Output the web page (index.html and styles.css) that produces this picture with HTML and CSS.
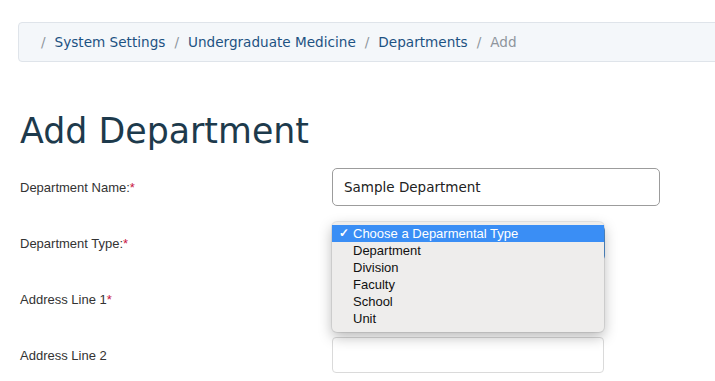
FILE: index.html
```html
<!DOCTYPE html>
<html lang="en">
<head>
    <meta charset="UTF-8">
    <meta name="viewport" content="width=device-width, initial-scale=1.0">
    <title>Add Department</title>
    <link rel="stylesheet" href="styles.css">
</head>
<body>
    <div class="page">
        <nav class="crumbs">
            <span class="sep">/</span>
            <a href="#">System Settings</a>
            <span class="sep">/</span>
            <a href="#">Undergraduate Medicine</a>
            <span class="sep">/</span>
            <a href="#">Departments</a>
            <span class="sep">/</span>
            <span class="current">Add</span>
        </nav>

        <h1 class="title">Add Department</h1>

        <form class="dept-form">
            <div class="form-row">
                <label for="dname">Department Name:<span class="req">*</span></label>
                <input type="text" id="dname" class="field field-wide" value="Sample Department">
            </div>

            <div class="form-row">
                <label for="dtype">Department Type:<span class="req">*</span></label>
                <div class="select-wrap">
                    <div id="dtype" class="field field-select"></div>
                    <ul class="popup">
                        <li class="active"><span class="tick">&#10003;</span>Choose a Deparmental Type</li>
                        <li>Department</li>
                        <li>Division</li>
                        <li>Faculty</li>
                        <li>School</li>
                        <li>Unit</li>
                    </ul>
                </div>
            </div>

            <div class="form-row">
                <label for="addr1">Address Line 1<span class="req">*</span></label>
                <input type="text" id="addr1" class="field">
            </div>

            <div class="form-row">
                <label for="addr2">Address Line 2</label>
                <input type="text" id="addr2" class="field">
            </div>
        </form>
    </div>
</body>
</html>
```

FILE: styles.css
```css
body {
    margin: 0;
    overflow: hidden;
    background: #fff;
    font-family: "Liberation Sans", Arial, sans-serif;
}

.page {
    padding: 22px 0 0 18px;
}

.crumbs {
    display: flex;
    align-items: center;
    width: 760px;
    height: 38px;
    padding-left: 20px;
    background: #f4f7fa;
    border: 1px solid #dfe4ea;
    border-radius: 4px;
    font-family: "DejaVu Sans", Verdana, sans-serif;
    font-size: 13.6px;
}

.crumbs a {
    color: #1d5282;
    text-decoration: none;
}

.crumbs .sep {
    color: #8e959c;
    padding: 0 9px 0 2px;
}

.crumbs a + .sep {
    padding-left: 9px;
}

.crumbs .current {
    color: #8e959c;
}

.title {
    margin: 49px 0 0 2px;
    font-family: "DejaVu Sans", Verdana, sans-serif;
    font-size: 34.8px;
    font-weight: normal;
    line-height: 40px;
    color: #1d3a4c;
}

.dept-form {
    display: flex;
    flex-direction: column;
    gap: 18px;
    margin-top: 17px;
}

.form-row {
    display: grid;
    grid-template-columns: 314px auto;
    align-items: center;
    height: 38px;
}

label {
    padding-left: 2px;
    font-size: 13px;
    color: #333;
}

.req {
    color: #c8163f;
}

.field {
    box-sizing: border-box;
    width: 272px;
    height: 36px;
    border: 1px solid #dadada;
    border-radius: 4px;
    padding: 0 11px;
    background: #fff;
}

.field-wide {
    width: 328px;
    height: 38px;
    border-color: #9c9c9c;
    border-radius: 5px;
    font-family: "DejaVu Sans", Verdana, sans-serif;
    font-size: 13.5px;
    color: #222;
}

.select-wrap {
    position: relative;
}

.field-select {
    width: 273px;
    height: 34px;
    border-color: #5a9be0;
}

.popup {
    position: absolute;
    top: -4px;
    left: 0;
    width: 272px;
    margin: 0;
    padding: 3px 0 5px;
    list-style: none;
    background: #eeedec;
    border-radius: 5px;
    box-shadow: 0 0 0 1px rgba(0, 0, 0, 0.08), 0 5px 14px rgba(0, 0, 0, 0.28);
    font-size: 13px;
    color: #111;
}

.popup li {
    height: 17px;
    line-height: 17px;
    padding-left: 21px;
}

.popup li.active {
    position: relative;
    background: #3a8ef5;
    color: #fff;
}

.tick {
    position: absolute;
    left: 7px;
    font-size: 12px;
    font-weight: bold;
}
```
